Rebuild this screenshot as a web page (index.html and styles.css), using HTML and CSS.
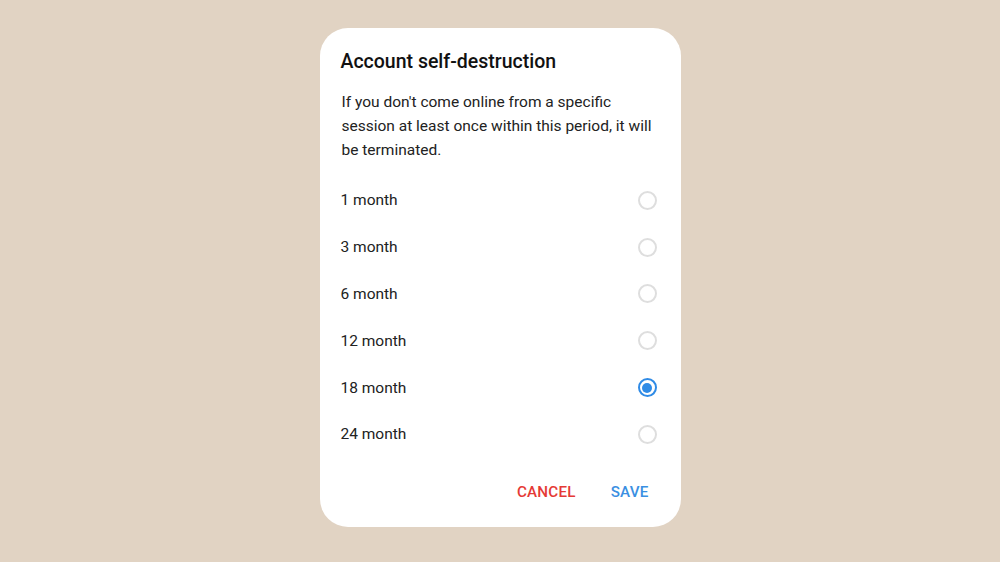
FILE: index.html
```html
<!DOCTYPE html>
<html>
<head>
<meta charset="utf-8">
<link rel="stylesheet" href="styles.css">
</head>
<body>
<div class="dialog">
  <h1 class="title">Account self-destruction</h1>
  <p class="desc">If you don't come online from a specific session at least once within this period, it will be terminated.</p>
  <ul class="options">
    <li class="option"><span>1 month</span><span class="radio"></span></li>
    <li class="option"><span>3 month</span><span class="radio"></span></li>
    <li class="option"><span>6 month</span><span class="radio"></span></li>
    <li class="option"><span>12 month</span><span class="radio"></span></li>
    <li class="option"><span>18 month</span><span class="radio checked"></span></li>
    <li class="option"><span>24 month</span><span class="radio"></span></li>
  </ul>
  <div class="actions">
    <button class="btn cancel">CANCEL</button>
    <button class="btn save">SAVE</button>
  </div>
</div>
</body>
</html>
```
FILE: styles.css
```css
html, body {
  margin: 0;
  padding: 0;
}
body {
  width: 1000px;
  height: 562px;
  background: #e1d3c3;
  font-family: Roboto, "Noto Sans", sans-serif;
  display: flex;
  justify-content: center;
  align-items: flex-start;
  padding-top: 28px;
  box-sizing: border-box;
  color: #1c1c1c;
}
.dialog {
  width: 361px;
  height: 499px;
  box-sizing: border-box;
  background: #fff;
  border-radius: 28px;
  padding: 22px 24px 17px 21px;
  display: flex;
  flex-direction: column;
}
.title {
  margin: 0;
  font-size: 19.5px;
  font-weight: 500;
  line-height: 24px;
  color: #111;
}
.desc {
  margin: 16px -6px 0 1px;
  font-size: 15.5px;
  line-height: 24px;
  color: #222;
}
.options {
  list-style: none;
  margin: 15px 0 0 0;
  padding: 0;
}
.option {
  height: 46.8px;
  display: flex;
  align-items: center;
  justify-content: space-between;
  font-size: 15.5px;
  color: #222;
}
.radio {
  width: 19px;
  height: 19px;
  box-sizing: border-box;
  border: 2px solid #dedede;
  border-radius: 50%;
  position: relative;
}
.radio.checked {
  border-color: #2f8be6;
}
.radio.checked::after {
  content: "";
  position: absolute;
  left: 2.5px;
  top: 2.5px;
  width: 10px;
  height: 10px;
  border-radius: 50%;
  background: #2f8be6;
}
.actions {
  margin-top: auto;
  display: flex;
  justify-content: flex-end;
  gap: 35px;
  padding-right: 8px;
}
.btn {
  border: none;
  background: none;
  padding: 0;
  height: 36px;
  font-family: Roboto, "Noto Sans", sans-serif;
  font-size: 15.2px;
  font-weight: 500;
  letter-spacing: 0.2px;
}
.cancel { color: #e53935; }
.save { color: #3a8fe2; }
```
